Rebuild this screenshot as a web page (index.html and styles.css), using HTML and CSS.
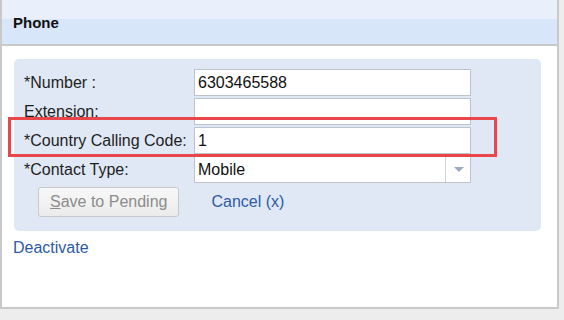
FILE: index.html
```html
<!DOCTYPE html>
<html lang="en">
<head>
  <meta charset="UTF-8" />
  <title>Phone</title>
  <link rel="stylesheet" href="styles.css">
</head>
<body>
  <div class="panel">
    <div class="panel-head">Phone</div>
    <div class="panel-body">
      <div class="edit-box">
        <div class="form-grid">
          <label>*Number :</label>
          <div class="field">6303465588</div>
          <label>Extension:</label>
          <div class="field"></div>
          <label>*Country Calling Code:</label>
          <div class="field">1</div>
          <label>*Contact Type:</label>
          <div class="field select">
            <span>Mobile</span>
            <span class="select-arrow"></span>
          </div>
        </div>
        <div class="actions">
          <button class="btn" disabled><u>S</u>ave to Pending</button>
          <a class="link" href="#">Cancel (x)</a>
        </div>
      </div>
      <a class="link deactivate" href="#">Deactivate</a>
    </div>
    <div class="highlight"></div>
  </div>
</body>
</html>
```

FILE: styles.css
```css
body {
  margin: 0;
  background: #ededed;
  font-family: "Liberation Sans", Arial, sans-serif;
  font-size: 16px;
  color: #1e1e1e;
}
.panel {
  position: relative;
  width: 559px;
  height: 309px;
  box-sizing: border-box;
  background: #fff;
  border: 2px solid #c9c9c9;
  border-top: none;
}
.panel-head {
  height: 44px;
  line-height: 45px;
  padding-left: 11px;
  font-size: 15px;
  font-weight: bold;
  color: #111;
  background: linear-gradient(#e9f0fb 0, #e9f0fb 19px, #d8e6f9 19px, #d8e6f9 100%);
  border-bottom: 2px solid #c9c9c9;
}
.panel-body {
  padding: 13px 16px 0 12px;
}
.edit-box {
  background: #dfe8f4;
  border-radius: 5px;
  padding: 10px 10px 14px;
}
.form-grid {
  display: grid;
  grid-template-columns: 170px 277px;
  row-gap: 2px;
}
.form-grid label {
  line-height: 27px;
  white-space: nowrap;
}
.field {
  height: 27px;
  box-sizing: border-box;
  background: #fff;
  border: 1px solid #bcc3cc;
  padding-left: 3px;
  line-height: 25px;
  color: #111;
}
.select {
  display: flex;
  justify-content: space-between;
}
.select-arrow {
  width: 24px;
  border-left: 1px solid #cfd4da;
  position: relative;
}
.select-arrow::after {
  content: "";
  position: absolute;
  left: 8px;
  top: 10px;
  border-left: 5px solid transparent;
  border-right: 5px solid transparent;
  border-top: 5px solid #9aaac2;
}
.actions {
  display: flex;
  align-items: center;
  margin-top: 4px;
  padding-left: 14px;
}
.btn {
  height: 30px;
  padding: 0 11px;
  font-family: inherit;
  font-size: 16px;
  color: #8c8c8c;
  background: linear-gradient(#f8f8f8, #ebebeb);
  border: 1px solid #c8c8c8;
  border-radius: 3px;
}
.link {
  color: #2d5ba3;
  text-decoration: none;
}
.actions .link {
  margin-left: 32px;
}
.deactivate {
  display: block;
  margin-top: 8px;
  margin-left: -1px;
  line-height: 18px;
}
.highlight {
  position: absolute;
  left: 6px;
  top: 117px;
  width: 489px;
  height: 40px;
  box-sizing: border-box;
  border: 3px solid #e8464a;
}
```
